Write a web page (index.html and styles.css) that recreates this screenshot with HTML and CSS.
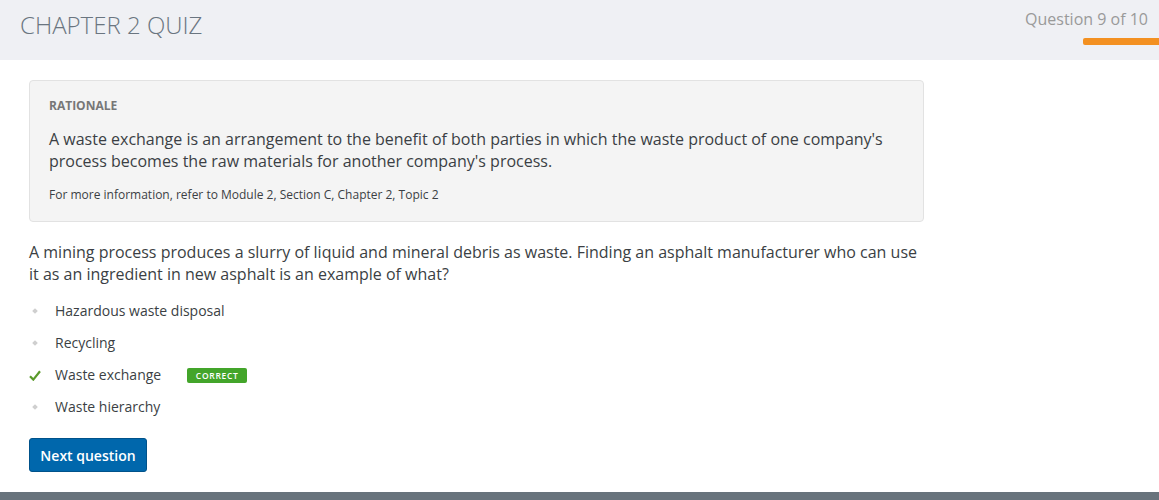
FILE: index.html
```html
<!DOCTYPE html>
<html>
<head>
<meta charset="utf-8">
<link rel="stylesheet" href="styles.css">
</head>
<body>
<header class="top">
  <h1 class="title">CHAPTER 2 QUIZ</h1>
  <div class="progress">
    <div class="progress-label">Question 9 of 10</div>
    <div class="progress-bar"></div>
  </div>
</header>
<main class="content">
  <section class="rationale">
    <h2 class="rationale-head">RATIONALE</h2>
    <p class="rationale-text">A waste exchange is an arrangement to the benefit of both parties in which the waste product of one company's process becomes the raw materials for another company's process.</p>
    <p class="rationale-ref">For more information, refer to Module 2, Section C, Chapter 2, Topic 2</p>
  </section>
  <p class="question">A mining process produces a slurry of liquid and mineral debris as waste. Finding an asphalt manufacturer who can use it as an ingredient in new asphalt is an example of what?</p>
  <ul class="options">
    <li class="option"><span class="mark"><span class="dot"></span></span><span class="opt-text">Hazardous waste disposal</span></li>
    <li class="option"><span class="mark"><span class="dot"></span></span><span class="opt-text">Recycling</span></li>
    <li class="option"><span class="mark"><svg width="12" height="11" viewBox="0 0 12 11"><path d="M1 6.2 L4.3 9.6 L11 1.2" fill="none" stroke="#5a9a2a" stroke-width="2.2"/></svg></span><span class="opt-text">Waste exchange</span><span class="badge">CORRECT</span></li>
    <li class="option"><span class="mark"><span class="dot"></span></span><span class="opt-text">Waste hierarchy</span></li>
  </ul>
  <button class="next">Next question</button>
</main>
<footer class="bottom"></footer>
</body>
</html>
```
FILE: styles.css
```css
* { box-sizing: border-box; }
html, body { margin: 0; padding: 0; }
body {
  font-family: "Open Sans", "Liberation Sans", sans-serif;
  color: #333;
  background: #fff;
  width: 1159px;
  height: 500px;
  overflow: hidden;
  display: flex;
  flex-direction: column;
}
.top {
  height: 60px;
  background: #eff0f4;
  display: flex;
  justify-content: space-between;
  align-items: flex-start;
}
.title {
  margin: 0;
  padding: 10px 0 0 20px;
  font-size: 24px;
  font-weight: 300;
  color: #6a7580;
  line-height: 30px;
}
.progress {
  display: flex;
  flex-direction: column;
  align-items: flex-end;
  padding-top: 9px;
}
.progress-label {
  font-size: 16px;
  color: #9a9a9a;
  line-height: 20px;
  padding-right: 11px;
}
.progress-bar {
  margin-top: 9px;
  width: 76px;
  height: 7px;
  background: #f39021;
  border-radius: 2px 0 0 2px;
}
.content {
  flex: 1;
  padding: 20px 0 0 29px;
  width: 924px;
  box-sizing: content-box;
}
.rationale {
  width: 895px;
  background: #f4f4f4;
  border: 1px solid #e2e2e2;
  border-radius: 4px;
  padding: 16px 19px 17px;
}
.rationale-head {
  margin: 0;
  font-size: 12px;
  font-weight: 700;
  color: #777;
  line-height: 18px;
}
.rationale-text {
  margin: 13px 0 0;
  font-size: 16px;
  line-height: 22px;
  color: #3b3f44;
}
.rationale-ref {
  margin: 14px 0 0;
  font-size: 12px;
  line-height: 18px;
  color: #3b3f44;
}
.question {
  margin: 19px 0 0;
  width: 895px;
  font-size: 16px;
  line-height: 22px;
  color: #3b3f44;
}
.options {
  list-style: none;
  margin: 10px 0 0;
  padding: 0;
}
.option {
  display: flex;
  align-items: center;
  height: 32px;
  font-size: 14px;
  color: #3b3f44;
}
.mark {
  width: 26px;
  display: flex;
  align-items: center;
  justify-content: flex-start;
}
.dot {
  display: block;
  width: 4px;
  height: 4px;
  margin-left: 4px;
  background: #cfcfcf;
  transform: rotate(45deg);
}
.opt-text { line-height: 20px; }
.badge {
  margin-left: 26px;
  width: 60px;
  text-align: center;
  background: #43a52a;
  color: #fff;
  font-size: 8.5px;
  font-weight: 600;
  letter-spacing: 0.7px;
  line-height: 15px;
  height: 15px;
  border-radius: 2px;
}
.next {
  margin-top: 15px;
  height: 34px;
  width: 118px;
  padding: 0;
  background: #0067ac;
  border: 1px solid #00528a;
  border-radius: 3px;
  color: #fff;
  font-family: "Open Sans", "Liberation Sans", sans-serif;
  font-size: 14px;
  font-weight: 600;
}
.bottom {
  height: 8px;
  background: #68737c;
}
```
